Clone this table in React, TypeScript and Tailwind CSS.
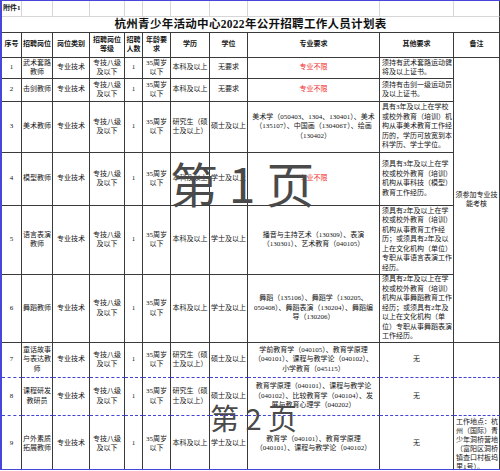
import React from "react";

type Row = {
  n: string;
  post: string[];
  edu: string[];
  deg: string;
  major: string[] | "red";
  other: string[] | "none";
  h: string;
  dashed?: boolean;
};

const rows: Row[] = [
  { n: "1", post: ["武术套路", "教师"], edu: ["本科及以上"], deg: "无要求", major: "red", other: ["须持有武术套路运动健", "将及以上证书。"], h: "h-[21px]" },
  { n: "2", post: ["击剑教师"], edu: ["本科及以上"], deg: "无要求", major: "red", other: ["须持有击剑一级运动员", "及以上证书。"], h: "h-[23px]" },
  {
    n: "3", post: ["美术教师"], edu: ["研究生（硕", "士及以上）"], deg: "硕士及以上",
    major: ["美术学（050403、1304、130401）、美术", "（135107）、中国画（130406T）、绘画", "（130402）"],
    other: ["具有3年及以上在学校", "或校外教育（培训）机", "构从事美术教育工作经", "历的，学历可放宽到本", "科学历、学士学位。"], h: "h-[51px]",
  },
  {
    n: "4", post: ["模型教师"], edu: ["本科及以上"], deg: "学士及以上", major: "red",
    other: ["须具有3年及以上在学", "校或校外教育（培训）", "机构从事科技（模型）", "教育工作经历。"], h: "h-[53px]",
  },
  {
    n: "5", post: ["语言表演", "教师"], edu: ["本科及以上"], deg: "学士及以上",
    major: ["播音与主持艺术（130309）、表演", "（130301）、艺术教育（040105）"],
    other: ["须具有2年及以上在学", "校或校外教育（培训）", "机构从事教育工作经", "历；或须具有2年及以", "上在文化机构（单位）", "专职从事语言表演工作", "经历。"], h: "h-[69px]",
  },
  {
    n: "6", post: ["舞蹈教师"], edu: ["本科及以上"], deg: "学士及以上",
    major: ["舞蹈（135106）、舞蹈学（130205、", "050408）、舞蹈表演（130204）、舞蹈编", "导（130206）"],
    other: ["须具有2年及以上在学", "校或校外教育（培训）", "机构从事舞蹈教育工作", "经历；或须具有2年及", "以上在文化机构（单", "位）专职从事舞蹈表演", "工作经历。"], h: "h-[68px]",
  },
  {
    n: "7", post: ["童话故事", "与表达教", "师"], edu: ["研究生（硕", "士及以上）"], deg: "硕士及以上",
    major: ["学前教育学（040105）、教育学原理", "（040101）、课程与教学论（040102）、", "小学教育（045115）"],
    other: "none", h: "h-[35px]", dashed: true,
  },
  {
    n: "8", post: ["课程研发", "教研员"], edu: ["研究生（硕", "士及以上）"], deg: "硕士及以上",
    major: ["教育学原理（040101）、课程与教学论", "（040102）、比较教育学（040104）、发", "展与教育心理学（040202）"],
    other: "none", h: "h-[38px]", dashed: true,
  },
  {
    n: "9", post: ["户外素质", "拓展教师"], edu: ["本科及以上"], deg: "学士及以上",
    major: ["教育学（040101）、教育学原理", "（040101）、课程与教学论（040102）"],
    other: "none", h: "h-[56px]",
  },
];

const Lines = ({ lines }: { lines: string[] }) => (
  <>
    {lines.map((l, i) => (
      <div key={i} className="whitespace-nowrap">
        {l}
      </div>
    ))}
  </>
);

export default function App() {
  const cellBase = "border-r border-b border-[#3a3a3a] text-center align-middle px-0";
  const dashedCls = "border-b-[#4343d6] [border-bottom-style:dashed]";
  const light = "border-r border-b border-[#d6d6d6]";
  return (
    <div className="w-[500px] h-[471px] bg-white">
      <div className="relative w-[500px] h-[470px] overflow-hidden box-border border-t border-l-2 border-b border-[#4646d8] font-['Liberation_Serif','Noto_Sans_CJK_SC',serif] text-[7px] leading-[9.5px] text-[#151515]">
        <table className="table-fixed border-separate border-spacing-0 w-[498px]">
          <colgroup>
            <col className="w-[20px]" />
            <col className="w-[31px]" />
            <col className="w-[37px]" />
            <col className="w-[35px]" />
            <col className="w-[18px]" />
            <col className="w-[28px]" />
            <col className="w-[39px]" />
            <col className="w-[38px]" />
            <col className="w-[132px]" />
            <col className="w-[74px]" />
            <col className="w-[46px]" />
          </colgroup>
          <tbody>
            <tr className="h-[16px]">
              <td className={`${light} text-left pl-[1px] font-bold whitespace-nowrap`}>附件1</td>
              <td className={light}></td>
              <td className={light}></td>
              <td className={light}></td>
              <td className={light}></td>
              <td className={light}></td>
              <td className={light}></td>
              <td className={light}></td>
              <td className={light}></td>
              <td className={light}></td>
              <td className="border-r border-b border-[#d6d6d6] border-r-[#3a3a3a]"></td>
            </tr>
            <tr className="h-[16px]">
              <td colSpan={11} className="border-r border-b border-[#3a3a3a] text-center align-middle font-bold text-[11.5px] leading-[15px] tracking-[0.3px] text-[#111]">
                杭州青少年活动中心2022年公开招聘工作人员计划表
              </td>
            </tr>
            <tr className="h-[25px] font-bold">
              <td className={cellBase}>序号</td>
              <td className={cellBase}>招聘岗位</td>
              <td className={cellBase}>岗位类别</td>
              <td className={cellBase}>
                <Lines lines={["招聘岗位", "等级"]} />
              </td>
              <td className={cellBase}>
                <Lines lines={["招聘", "人数"]} />
              </td>
              <td className={cellBase}>
                <Lines lines={["年龄要", "求"]} />
              </td>
              <td className={cellBase}>学历</td>
              <td className={cellBase}>学位</td>
              <td className={cellBase}>专业要求</td>
              <td className={cellBase}>其他要求</td>
              <td className={cellBase}>备注</td>
            </tr>
            {rows.map((r, idx) => {
              const c = r.dashed ? `${cellBase} ${dashedCls}` : cellBase;
              return (
                <tr key={r.n} className={r.h}>
                  <td className={c}>{r.n}</td>
                  <td className={c}>
                    <Lines lines={r.post} />
                  </td>
                  <td className={c}>专业技术</td>
                  <td className={c}>
                    <Lines lines={["专技八级", "及以下"]} />
                  </td>
                  <td className={c}>1</td>
                  <td className={c}>
                    <Lines lines={["35周岁", "以下"]} />
                  </td>
                  <td className={c}>
                    <Lines lines={r.edu} />
                  </td>
                  <td className={c}>{r.deg}</td>
                  <td className={c}>
                    {r.major === "red" ? (
                      <span className="text-[#f02a2a]">专业不限</span>
                    ) : (
                      <Lines lines={r.major} />
                    )}
                  </td>
                  <td className={`${c} ${r.other === "none" ? "" : "!text-left pl-[2px]"}`}>
                    {r.other === "none" ? "无" : <Lines lines={r.other} />}
                  </td>
                  {idx === 0 && (
                    <td rowSpan={6} className={cellBase}>
                      <Lines lines={["须参加专业技", "能考核"]} />
                    </td>
                  )}
                  {(idx === 6 || idx === 7) && <td className={c}></td>}
                  {idx === 8 && (
                    <td className={`${c} !align-top text-left pl-[2px] pt-[2px] leading-[9px]`}>
                      <Lines lines={["工作地点：杭", "州（国际）青", "少年洞桥营地", "（富阳区洞桥", "镇查口村板坞", "里1号）。"]} />
                    </td>
                  )}
                </tr>
              );
            })}
          </tbody>
        </table>
        <div className="pointer-events-none absolute left-[168px] top-[157px] whitespace-nowrap font-['Noto_Sans_CJK_SC',sans-serif] text-[48px] leading-none text-[#4a4a4a]">
          第 1 页
        </div>
        <div className="pointer-events-none absolute left-[208px] top-[402px] whitespace-nowrap font-['Noto_Sans_CJK_SC',sans-serif] text-[29px] leading-none text-[#4a4a4a]">
          第 2 页
        </div>
      </div>
    </div>
  );
}
